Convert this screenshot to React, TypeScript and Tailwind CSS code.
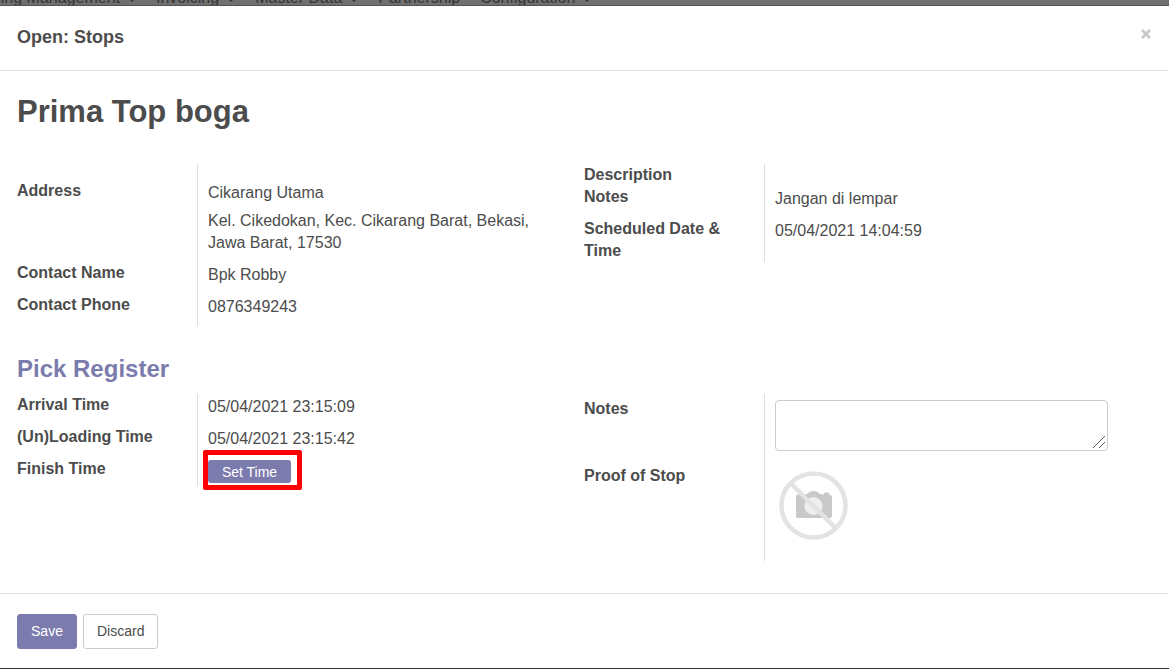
import React, { useState } from 'react';

interface FieldProps {
  label: string;
  htmlFor?: string;
  rowClass?: string;
  labelClass?: string;
  valueClass?: string;
  children: React.ReactNode;
}

interface MenuItem {
  name: string;
  hasCaret: boolean;
}

const menuItems: MenuItem[] = [
  { name: 'Invoicing', hasCaret: true },
  { name: 'Master Data', hasCaret: true },
  { name: 'Partnership', hasCaret: false },
  { name: 'Configuration', hasCaret: true },
];

const Caret: React.FC = () => (
  <svg className="w-2 h-1 ml-2 mt-1 shrink-0" viewBox="0 0 8 4" fill="currentColor" aria-hidden="true">
    <path d="M0 0h8L4 4z" />
  </svg>
);

const Field: React.FC<FieldProps> = ({
  label,
  htmlFor,
  rowClass = 'min-h-8',
  labelClass = 'pr-10',
  valueClass = 'pt-0.5',
  children,
}) => (
  <div className={`flex ${rowClass}`}>
    <div className={`w-[180px] shrink-0 font-bold ${labelClass}`}>
      {htmlFor ? <label htmlFor={htmlFor}>{label}</label> : label}
    </div>
    <div className={`flex-1 min-w-0 border-l border-[#dddddd] pl-2.5 ${valueClass}`}>{children}</div>
  </div>
);

const NoPhoto: React.FC = () => (
  <svg className="w-[77px] h-[77px]" viewBox="0 0 77 77" role="img" aria-label="No picture">
    <path
      d="M22.500 27.500h7.500c2.500 0 4-3.500 8.500-3.500s6 3.500 8.500 3.500h1.500q0-2 1.500-2h3q1.500 0 1.500 2.500h.5q2 0 2 2v19q0 2-2 2h-32q-2 0-2-2v-19.500q0-2 1.500-2z"
      fill="#c9c9c9"
    />
    <circle cx="38.500" cy="39" r="9" fill="#efefef" />
    <path d="M15.500 16l46 46" stroke="#e3e3e3" strokeWidth="4.500" />
    <circle cx="38.500" cy="38.500" r="32" fill="none" stroke="#e3e3e3" strokeWidth="4.500" />
  </svg>
);

const App: React.FC = () => {
  const [notes, setNotes] = useState('');

  return (
    <div className="min-h-screen flex flex-col bg-white border-b border-[#333333] text-[#4c4c4c] text-base/[22px] font-['Liberation_Sans',Arial,sans-serif]">
      <nav className="h-1.5 overflow-hidden flex items-end bg-[#707070] border-b border-[#555055] text-[#353535]">
        <div className="w-[136px] -mb-1 shrink-0 flex items-center justify-end whitespace-nowrap">
          Shipping Management
          <Caret />
        </div>
        <div className="flex items-center gap-5 ml-5 -mb-1 whitespace-nowrap">
          {menuItems.map((item) => (
            <span key={item.name} className="flex items-center">
              {item.name}
              {item.hasCaret && <Caret />}
            </span>
          ))}
        </div>
      </nav>

      <header className="flex items-start justify-between px-[17px] pt-5 pb-[22px] border-b border-[#e5e5e5]">
        <h4 className="text-lg/[22px] font-bold">Open: Stops</h4>
        <button type="button" aria-label="Close" className="w-3 h-4 flex items-center justify-center text-[#c8c8c8]">
          <svg className="w-2.5 h-2.5" viewBox="0 0 10 10" stroke="currentColor" strokeWidth="2.600" aria-hidden="true">
            <path d="M1 1l8 8M9 1l-8 8" />
          </svg>
        </button>
      </header>

      <main className="flex-1 pl-[17px] pr-[18px] pt-[21px]">
        <h1 className="text-[31px]/10 font-bold">Prima Top boga</h1>

        <div className="grid grid-cols-2 items-start mt-8">
          <section className="pr-[43px]">
            <Field label="Address" labelClass="pt-4" valueClass="pt-[18px] pb-2">
              <div>Cikarang Utama</div>
              <div className="mt-1.5">Kel. Cikedokan, Kec. Cikarang Barat, Bekasi, Jawa Barat, 17530</div>
            </Field>
            <Field label="Contact Name">Bpk Robby</Field>
            <Field label="Contact Phone">0876349243</Field>
          </section>
          <section className="pr-[43px]">
            <Field label="Description Notes" rowClass="min-h-[54px]" labelClass="pr-20" valueClass="pt-6">
              Jangan di lempar
            </Field>
            <Field label="Scheduled Date & Time">05/04/2021 14:04:59</Field>
          </section>
        </div>

        <h2 className="mt-6 text-2xl/[38px] font-bold text-[#7c7bad]">Pick Register</h2>

        <div className="grid grid-cols-2 items-start mt-1.5">
          <section className="pr-[43px]">
            <Field label="Arrival Time">05/04/2021 23:15:09</Field>
            <Field label="(Un)Loading Time">05/04/2021 23:15:42</Field>
            <Field label="Finish Time" rowClass="h-7">
              <div className="relative w-[83px]">
                <button type="button" className="block w-full h-[23px] rounded-[3px] bg-[#7c7bad] text-white text-sm/[22px]">
                  Set Time
                </button>
                <div className="absolute -left-[5px] -right-[11px] -top-2.5 -bottom-[7px] border-[5px] border-[#ff0000] rounded-xs pointer-events-none" />
              </div>
            </Field>
          </section>
          <section className="pr-[43px]">
            <Field label="Notes" htmlFor="notes" labelClass="pt-1" valueClass="pt-1.5 pb-3.5">
              <div className="relative">
                <textarea
                  id="notes"
                  value={notes}
                  onChange={(e) => setNotes(e.target.value)}
                  className="block w-full h-[51px] px-2 py-1 bg-white border border-[#cccccc] rounded resize-none"
                />
                <svg
                  className="absolute right-0.5 bottom-0.5 w-3.5 h-3.5 pointer-events-none"
                  viewBox="0 0 14 14"
                  stroke="#555555"
                  aria-hidden="true"
                >
                  <path d="M1 13L13 1M7 13l6-6" />
                </svg>
              </div>
            </Field>
            <Field label="Proof of Stop" rowClass="h-24">
              <NoPhoto />
            </Field>
          </section>
        </div>
      </main>

      <footer className="flex gap-1.5 mt-6 px-[17px] pt-5 pb-[19px] border-t border-[#e5e5e5] text-sm/5">
        <button type="button" className="h-[35px] px-3 pb-0.5 min-w-15 border border-[#7c7bad] rounded-[3px] bg-[#7c7bad] text-white">
          Save
        </button>
        <button type="button" className="h-[35px] px-[13px] pb-0.5 border border-[#cccccc] rounded-[3px] bg-white">
          Discard
        </button>
      </footer>
    </div>
  );
};

export default App;
